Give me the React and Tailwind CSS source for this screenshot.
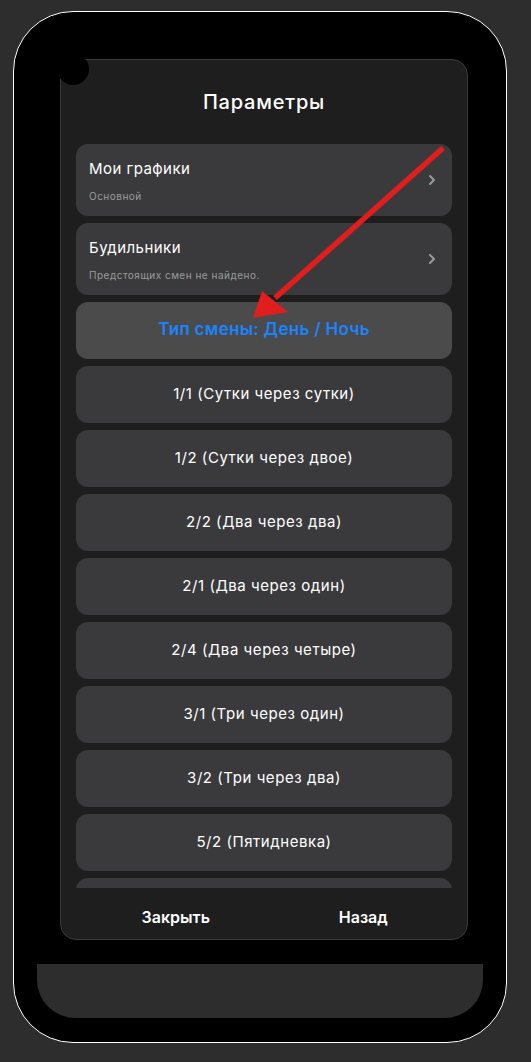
import React from "react";

const items = [
  "1/1 (Сутки через сутки)",
  "1/2 (Сутки через двое)",
  "2/2 (Два через два)",
  "2/1 (Два через один)",
  "2/4 (Два через четыре)",
  "3/1 (Три через один)",
  "3/2 (Три через два)",
  "5/2 (Пятидневка)",
  "",
];

function Chevron() {
  return (
    <svg width="8" height="12" viewBox="0 0 8 12" className="shrink-0">
      <path d="M2 2 L6 6 L2 10" fill="none" stroke="#9a9a9c" strokeWidth="2" strokeLinecap="round" strokeLinejoin="round" />
    </svg>
  );
}

export default function App() {
  return (
    <div
      className="relative w-[531px] h-[1062px] bg-[#2d2d2d] pt-[11px] pl-[13px] overflow-hidden"
      style={{ fontFamily: "Inter, 'Noto Sans', sans-serif" }}
    >
      <div className="relative w-[494px] h-[1032px] rounded-[60px] border-[1.5px] border-white bg-black flex flex-col">
        <div className="relative ml-[46px] mt-[46.5px] w-[408px] h-[881px] rounded-[16px] border border-[#3a3a3a] bg-[#1e1e1e] flex flex-col overflow-hidden">
          <div className="h-[84px] shrink-0 flex items-center justify-center text-white text-[20px] font-medium tracking-[0.8px]">
            Параметры
          </div>
          <div className="flex-1 overflow-hidden px-[15px] flex flex-col gap-[7px]">
            <div className="shrink-0 h-[72px] rounded-[12px] bg-[#3a3a3c] flex items-center pl-[13px] pr-[16px]">
              <div className="flex-1 flex flex-col pt-[2px]">
                <div className="text-white text-[15px] leading-[20px] tracking-[0.45px]">Мои графики</div>
                <div className="mt-[10px] text-[#9a9a9c] text-[10px] leading-[14px] tracking-[0.5px]">Основной</div>
              </div>
              <Chevron />
            </div>
            <div className="shrink-0 h-[72px] rounded-[12px] bg-[#3a3a3c] flex items-center pl-[13px] pr-[16px]">
              <div className="flex-1 flex flex-col pt-[2px]">
                <div className="text-white text-[15px] leading-[20px] tracking-[0.45px]">Будильники</div>
                <div className="mt-[10px] text-[#9a9a9c] text-[10px] leading-[14px] tracking-[0.5px]">Предстоящих смен не найдено.</div>
              </div>
              <Chevron />
            </div>
            <div className="shrink-0 h-[57px] rounded-[12px] bg-[#4b4b4b] flex items-center justify-center text-[#1a84ff] text-[17px] font-semibold tracking-[0.3px]">
              Тип смены: День / Ночь
            </div>
            {items.map((t, i) => (
              <div
                key={i}
                className="shrink-0 h-[57px] rounded-[12px] bg-[#3a3a3c] flex items-center justify-center text-white text-[15px] tracking-[0.55px]"
              >
                {t}
              </div>
            ))}
          </div>
          <div className="h-[51px] shrink-0 grid grid-cols-2 pl-[21px] pr-[10px] pt-[7px] items-center text-white text-[16px] font-semibold">
            <div className="text-center">Закрыть</div>
            <div className="text-center">Назад</div>
          </div>
        </div>
        <div className="ml-[22.5px] mt-[24px] w-[446px] h-[54px] bg-[#2d2d2d] rounded-b-[38px]" />
        <div className="absolute left-[43px] top-[41px] w-[32px] h-[32px] rounded-full bg-black" />
      </div>
      <svg className="absolute left-0 top-0 pointer-events-none" width="531" height="1062" viewBox="0 0 531 1062">
        <line x1="443" y1="148" x2="275" y2="298" stroke="#e01e1e" strokeWidth="5.5" strokeLinecap="butt" />
        <polygon points="253,318 262,291 288,312" fill="#e01e1e" />
      </svg>
    </div>
  );
}
